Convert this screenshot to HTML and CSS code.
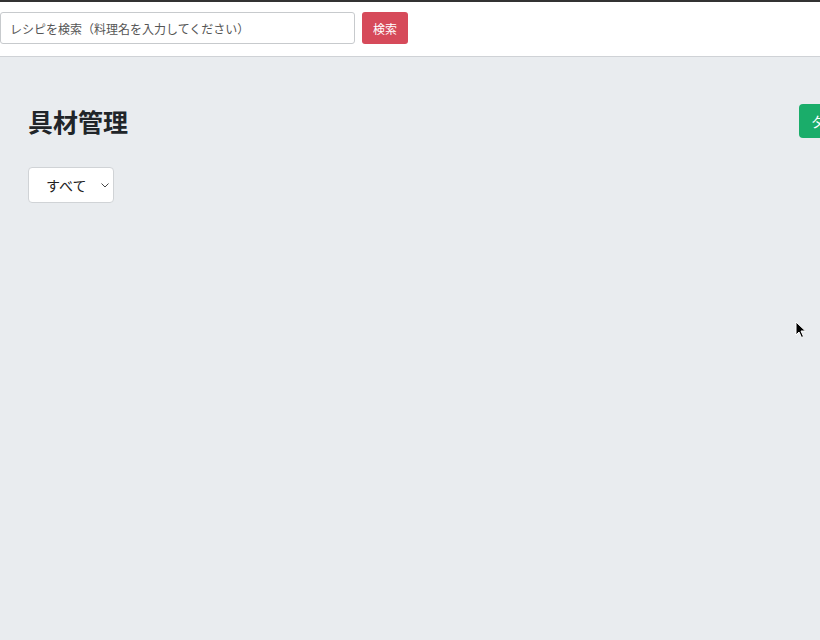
FILE: index.html
```html
<!DOCTYPE html>
<html lang="ja">
<head>
<meta charset="utf-8">
<link rel="stylesheet" href="styles.css">
</head>
<body>
<header class="topbar">
  <form class="search">
    <input class="search-input" type="text" placeholder="レシピを検索（料理名を入力してください）">
    <button class="search-btn" type="button">検索</button>
  </form>
</header>
<main class="content">
  <div class="title-row">
    <h1 class="title">具材管理</h1>
    <button class="add-btn" type="button">タグ追加</button>
  </div>
  <div class="filter">
    <select class="filter-select">
      <option>すべて</option>
    </select>
  </div>
</main>
<svg class="cursor" width="12" height="18" viewBox="0 0 12 18"><path d="M1 1 L1 14 L4 11 L6.5 16.5 L8.5 15.5 L6 10 L10.5 10 Z" fill="#000" stroke="#fff" stroke-width="1"/></svg>
</body>
</html>
```
FILE: styles.css
```css
html, body {
  margin: 0;
  padding: 0;
}
body {
  background: #e9ecef;
  font-family: "Noto Sans CJK JP", "Noto Sans", sans-serif;
  color: #212529;
  overflow: hidden;
  height: 640px;
  position: relative;
}
.topbar {
  background: #fff;
  border-top: 2px solid #333;
  border-bottom: 1px solid #cfd2d6;
  box-sizing: border-box;
  height: 57px;
  padding-top: 10px;
}
.search {
  display: flex;
  gap: 7px;
  margin: 0;
}
.search-input {
  width: 355px;
  height: 32px;
  box-sizing: border-box;
  border: 1px solid #c7cacd;
  border-radius: 3px;
  padding: 0 9px;
  font-family: inherit;
  font-size: 12px;
  color: #555;
  outline: none;
}
.search-input::placeholder {
  color: #555;
}
.search-btn {
  width: 46px;
  height: 32px;
  background: #d64a5a;
  border: none;
  border-radius: 3px;
  color: #fff;
  font-family: inherit;
  font-size: 12px;
  padding: 0;
}
.content {
  padding: 46px 0 0 28px;
  width: 900px;
}
.title-row {
  display: flex;
  justify-content: space-between;
  align-items: flex-start;
}
.title {
  margin: 0;
  font-size: 25px;
  font-weight: 700;
  line-height: 36px;
}
.add-btn {
  width: 100px;
  height: 34px;
  margin-top: 1px;
  background: #1aad6a;
  border: none;
  border-radius: 4px;
  color: #fff;
  font-family: inherit;
  font-size: 14px;
  padding: 0 12px;
  text-align: left;
  margin-right: 29px;
}
.filter {
  margin-top: 28px;
}
.filter-select {
  appearance: none;
  -webkit-appearance: none;
  width: 86px;
  height: 36px;
  border: 1px solid #d0d3d6;
  border-radius: 4px;
  background: #fff url("data:image/svg+xml;utf8,<svg xmlns='http://www.w3.org/2000/svg' width='8' height='5' viewBox='0 0 8 5'><path d='M0.5 0.5 L4 4 L7.5 0.5' fill='none' stroke='%23444' stroke-width='1'/></svg>") no-repeat right 4px center;
  font-family: inherit;
  font-size: 14px;
  color: #222;
  padding: 0 0 0 17px;
}
.cursor {
  position: absolute;
  left: 795px;
  top: 321px;
}
```
